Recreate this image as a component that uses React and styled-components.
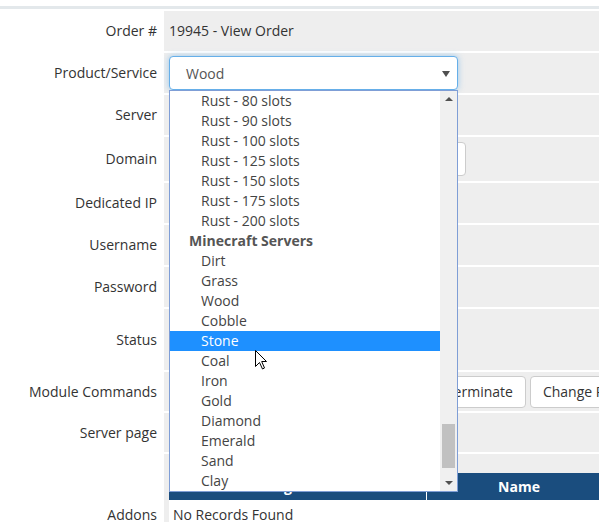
import styled, { createGlobalStyle } from "styled-components";

const GlobalStyle = createGlobalStyle`
  html, body {
    margin: 0;
    padding: 0;
    overflow: hidden;
    background: #fff;
  }
  body {
    font-family: "Open Sans", "Liberation Sans", sans-serif;
    font-size: 14px;
    line-height: 20px;
    color: #333;
  }
`;

const Page = styled.div`
  position: relative;
  width: 820px;
  padding-top: 6px;
`;

const TopRule = styled.div`
  height: 3px;
  background: #e3e8eb;
  margin-bottom: 2px;
`;

const Rows = styled.div`
  display: flex;
  flex-direction: column;
  gap: 2px;
`;

const Row = styled.div`
  display: grid;
  grid-template-columns: 164px 1fr;
  min-height: ${(props) => props.$h}px;
`;

const Label = styled.div`
  display: flex;
  align-items: center;
  justify-content: flex-end;
  padding-right: 7px;
  color: #333;
`;

const Field = styled.div`
  display: flex;
  align-items: ${(props) => (props.$top ? "flex-start" : "center")};
  gap: 4px;
  padding: ${(props) => (props.$top ? "19px 0 0 5px" : "0 5px")};
  background: #eee;
`;

const SelectWrap = styled.div`
  position: relative;
  width: ${(props) => props.$w || 289}px;
`;

const SelectBox = styled.div`
  box-sizing: border-box;
  height: 34px;
  display: flex;
  align-items: center;
  justify-content: space-between;
  padding: 1px 7px 0 16px;
  background: #fff;
  border: 1px solid ${(props) => (props.$focus ? "#66afe9" : "#ccc")};
  border-radius: 4px;
  color: #555;
  box-shadow: ${(props) =>
    props.$focus ? "0 0 6px rgba(102, 175, 233, 0.6)" : "inset 0 1px 1px rgba(0,0,0,.075)"};
`;

const TextInput = styled.div`
  box-sizing: border-box;
  width: ${(props) => props.$w}px;
  height: 34px;
  background: #fff;
  border: 1px solid #ccc;
  border-radius: 4px;
`;

const Dropdown = styled.div`
  position: absolute;
  top: 100%;
  left: 0;
  z-index: 5;
  box-sizing: border-box;
  width: 289px;
  height: 402px;
  display: flex;
  background: #fff;
  border: 1px solid #7f9ed6;
  overflow: hidden;
`;

const OptionList = styled.div`
  flex: 1;
  display: flex;
  flex-direction: column;
`;

const Option = styled.div`
  height: 20px;
  line-height: 20px;
  white-space: nowrap;
  padding-left: ${(props) => (props.$group ? 19 : 31)}px;
  font-weight: ${(props) => (props.$group ? 700 : 400)};
  color: ${(props) => (props.$active ? "#fff" : props.$group ? "#555" : "#444")};
  background: ${(props) => (props.$active ? "#1e90ff" : "transparent")};
`;

const ScrollTrack = styled.div`
  width: 17px;
  display: flex;
  flex-direction: column;
  align-items: center;
  justify-content: space-between;
  background: #f0f0f0;
  padding: 6px 0 6px;
  box-sizing: border-box;
`;

const ScrollArrow = styled.div`
  width: 0;
  height: 0;
  border-left: 4px solid transparent;
  border-right: 4px solid transparent;
  ${(props) =>
    props.$down ? "border-top: 4px solid #505050;" : "border-bottom: 4px solid #505050;"}
`;

const ScrollThumb = styled.div`
  width: 13px;
  height: 44px;
  margin-top: auto;
  margin-bottom: 13px;
  background: #c1c1c1;
`;

const Button = styled.div`
  box-sizing: border-box;
  height: 32px;
  display: flex;
  align-items: center;
  padding: 0 12px;
  background: #fff;
  border: 1px solid #ccc;
  border-radius: 4px;
  white-space: nowrap;
  color: #333;
`;

const AddonTable = styled.table`
  border-collapse: collapse;
  width: 780px;
  background: #fff;
  th {
    height: 27px;
    padding: 0;
    background: #1a4d7e;
    color: #fff;
    font-weight: 700;
    text-align: center;
  }
  th + th {
    border-left: 1px solid #fff;
  }
  td {
    padding: 5px 4px;
    height: 20px;
  }
`;

const Cursor = styled.svg`
  position: absolute;
  left: 255px;
  top: 350px;
  z-index: 10;
`;

const rust = [80, 90, 100, 125, 150, 175, 200];
const minecraft = [
  "Dirt",
  "Grass",
  "Wood",
  "Cobble",
  "Stone",
  "Coal",
  "Iron",
  "Gold",
  "Diamond",
  "Emerald",
  "Sand",
  "Clay",
];

const App = () => {
  return (
    <Page>
      <GlobalStyle />
      <TopRule />
      <Rows>
        <Row $h={40}>
          <Label>Order #</Label>
          <Field>19945 - View Order</Field>
        </Row>
        <Row $h={40}>
          <Label>Product/Service</Label>
          <Field>
            <SelectWrap>
              <SelectBox $focus>
                <span>Wood</span>
                <svg width="8" height="6" viewBox="0 0 8 6">
                  <polygon points="0,0 8,0 4,6" fill="#505050" />
                </svg>
              </SelectBox>
              <Dropdown>
                <OptionList>
                  {rust.map((n) => (
                    <Option key={n}>Rust - {n} slots</Option>
                  ))}
                  <Option $group>Minecraft Servers</Option>
                  {minecraft.map((name) => (
                    <Option key={name} $active={name === "Stone"}>
                      {name}
                    </Option>
                  ))}
                </OptionList>
                <ScrollTrack>
                  <ScrollArrow />
                  <ScrollThumb />
                  <ScrollArrow $down />
                </ScrollTrack>
              </Dropdown>
            </SelectWrap>
          </Field>
        </Row>
        <Row $h={40}>
          <Label>Server</Label>
          <Field>
            <SelectWrap $w={220}>
              <SelectBox>Rust Server</SelectBox>
            </SelectWrap>
          </Field>
        </Row>
        <Row $h={44}>
          <Label>Domain</Label>
          <Field>
            <TextInput $w={297} />
          </Field>
        </Row>
        <Row $h={40}>
          <Label>Dedicated IP</Label>
          <Field>
            <TextInput $w={200} />
          </Field>
        </Row>
        <Row $h={40}>
          <Label>Username</Label>
          <Field>
            <TextInput $w={200} />
          </Field>
        </Row>
        <Row $h={40}>
          <Label>Password</Label>
          <Field>
            <TextInput $w={200} />
          </Field>
        </Row>
        <Row $h={61}>
          <Label>Status</Label>
          <Field>
            <SelectWrap $w={150}>
              <SelectBox>Active</SelectBox>
            </SelectWrap>
          </Field>
        </Row>
        <Row $h={39}>
          <Label>Module Commands</Label>
          <Field>
            <Button>Create</Button>
            <Button>Suspend</Button>
            <Button>Unsuspend</Button>
            <Button>Terminate</Button>
            <Button>Change Package</Button>
            <Button>Change Password</Button>
          </Field>
        </Row>
        <Row $h={39}>
          <Label>Server page</Label>
          <Field>Open</Field>
        </Row>
        <Row $h={122}>
          <Label>Addons</Label>
          <Field $top>
            <AddonTable>
              <thead>
                <tr>
                  <th style={{ width: 257 }}>Reg Date</th>
                  <th style={{ width: 184 }}>Name</th>
                  <th>Pricing</th>
                  <th>Status</th>
                  <th>Next Due Date</th>
                </tr>
              </thead>
              <tbody>
                <tr>
                  <td colSpan={5}>No Records Found</td>
                </tr>
              </tbody>
            </AddonTable>
          </Field>
        </Row>
      </Rows>
      <Cursor width="13" height="20" viewBox="0 0 13 20">
        <path
          d="M0.5 0.5 L0.5 16.5 L4.5 12.5 L7.5 19 L9.5 18 L6.7 11.5 L11.5 11.5 Z"
          fill="#fff"
          stroke="#000"
          strokeWidth="1"
          strokeLinejoin="miter"
        />
      </Cursor>
    </Page>
  );
};

export default App;
